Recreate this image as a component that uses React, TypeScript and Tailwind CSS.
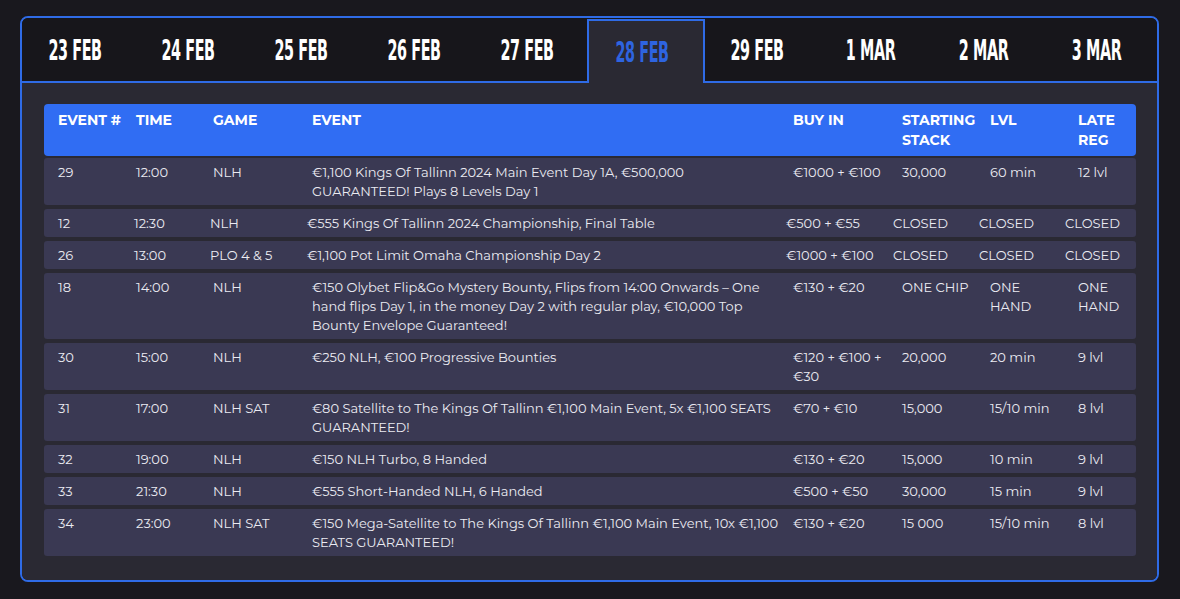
const tabs = ["23 FEB", "24 FEB", "25 FEB", "26 FEB", "27 FEB", "28 FEB", "29 FEB", "1 MAR", "2 MAR", "3 MAR"];
const activeTab = 5;

type Row = {
  num: string;
  time: string;
  game: string;
  event: string[];
  buyIn: string[];
  stack: string[];
  lvl: string[];
  late: string[];
  alt?: boolean;
};

const rows: Row[] = [
  { num: "29", time: "12:00", game: "NLH", event: ["€1,100 Kings Of Tallinn 2024 Main Event Day 1A, €500,000", "GUARANTEED! Plays 8 Levels Day 1"], buyIn: ["€1000 + €100"], stack: ["30,000"], lvl: ["60 min"], late: ["12 lvl"] },
  { num: "12", time: "12:30", game: "NLH", event: ["€555 Kings Of Tallinn 2024 Championship, Final Table"], buyIn: ["€500 + €55"], stack: ["CLOSED"], lvl: ["CLOSED"], late: ["CLOSED"], alt: true },
  { num: "26", time: "13:00", game: "PLO 4 & 5", event: ["€1,100 Pot Limit Omaha Championship Day 2"], buyIn: ["€1000 + €100"], stack: ["CLOSED"], lvl: ["CLOSED"], late: ["CLOSED"], alt: true },
  { num: "18", time: "14:00", game: "NLH", event: ["€150 Olybet Flip&Go Mystery Bounty, Flips from 14:00 Onwards – One", "hand flips Day 1, in the money Day 2 with regular play, €10,000 Top", "Bounty Envelope Guaranteed!"], buyIn: ["€130 + €20"], stack: ["ONE CHIP"], lvl: ["ONE", "HAND"], late: ["ONE", "HAND"] },
  { num: "30", time: "15:00", game: "NLH", event: ["€250 NLH, €100 Progressive Bounties"], buyIn: ["€120 + €100 +", "€30"], stack: ["20,000"], lvl: ["20 min"], late: ["9 lvl"] },
  { num: "31", time: "17:00", game: "NLH SAT", event: ["€80 Satellite to The Kings Of Tallinn €1,100 Main Event, 5x €1,100 SEATS", "GUARANTEED!"], buyIn: ["€70 + €10"], stack: ["15,000"], lvl: ["15/10 min"], late: ["8 lvl"] },
  { num: "32", time: "19:00", game: "NLH", event: ["€150 NLH Turbo, 8 Handed"], buyIn: ["€130 + €20"], stack: ["15,000"], lvl: ["10 min"], late: ["9 lvl"] },
  { num: "33", time: "21:30", game: "NLH", event: ["€555 Short-Handed NLH, 6 Handed"], buyIn: ["€500 + €50"], stack: ["30,000"], lvl: ["15 min"], late: ["9 lvl"] },
  { num: "34", time: "23:00", game: "NLH SAT", event: ["€150 Mega-Satellite to The Kings Of Tallinn €1,100 Main Event, 10x €1,100", "SEATS GUARANTEED!"], buyIn: ["€130 + €20"], stack: ["15 000"], lvl: ["15/10 min"], late: ["8 lvl"] },
];

const cols = "grid grid-cols-[78px_77px_99px_481px_109px_88px_88px_1fr]";
const altCols = "grid grid-cols-[76px_76px_97px_479px_107px_86px_86px_1fr]";

function Lines({ lines }: { lines: string[] }) {
  return (
    <div>
      {lines.map((l) => (
        <div key={l} className="whitespace-nowrap">{l}</div>
      ))}
    </div>
  );
}

export default function App() {
  return (
    <div className="min-h-[599px] bg-[#19181e] pt-[16px] pl-[20px] pr-[21px] font-['Montserrat','Inter',sans-serif]">
      <div className="rounded-[8px] border-2 border-[#2f6be6] overflow-hidden">
        <div className="flex h-[65px] bg-[#17161b] border-b-2 border-[#2f6be6]">
          {tabs.map((t, i) =>
            i === activeTab ? (
              <div key={t} className="flex-1 mt-[1px] -mb-[2px] pt-[3px] pr-[8px] flex items-center justify-center bg-[#2a2933] border-x-2 border-t-2 border-[#2f6be6]">
                <span className="font-['Liberation_Sans_Narrow','DejaVu_Sans_Condensed',sans-serif] font-bold text-[21px] tracking-[-0.5px] text-[#2e64e0] scale-y-[1.38] scale-x-[0.76] whitespace-nowrap">{t}</span>
              </div>
            ) : (
              <div key={t} className="flex-1 pt-[4px] pr-[8px] flex items-center justify-center">
                <span className="font-['Liberation_Sans_Narrow','DejaVu_Sans_Condensed',sans-serif] font-bold text-[21px] tracking-[-0.5px] text-white scale-y-[1.38] scale-x-[0.76] whitespace-nowrap">{t}</span>
              </div>
            )
          )}
        </div>

        <div className="bg-[#2a2933] pt-[21px] pb-[24px] pl-[22px] pr-[21px]">
          <div className={`${cols} bg-[#306df3] rounded-[4px] px-[14px] py-[6px] text-[14px] leading-[20px] font-bold text-white`}>
            <div>EVENT #</div>
            <div>TIME</div>
            <div>GAME</div>
            <div>EVENT</div>
            <div>BUY IN</div>
            <div>STARTING<br />STACK</div>
            <div>LVL</div>
            <div>LATE<br />REG</div>
          </div>

          <div className="mt-[2px] flex flex-col gap-[4px]">
            {rows.map((r) => (
              <div key={r.num} className={`${r.alt ? altCols : cols} bg-[#3a3953] rounded-[3px] px-[14px] py-[4.5px] text-[13px] leading-[19px] text-[#ebebf2]`}>
                <div>{r.num}</div>
                <div>{r.time}</div>
                <div>{r.game}</div>
                <Lines lines={r.event} />
                <Lines lines={r.buyIn} />
                <Lines lines={r.stack} />
                <Lines lines={r.lvl} />
                <Lines lines={r.late} />
              </div>
            ))}
          </div>
        </div>
      </div>
    </div>
  );
}
